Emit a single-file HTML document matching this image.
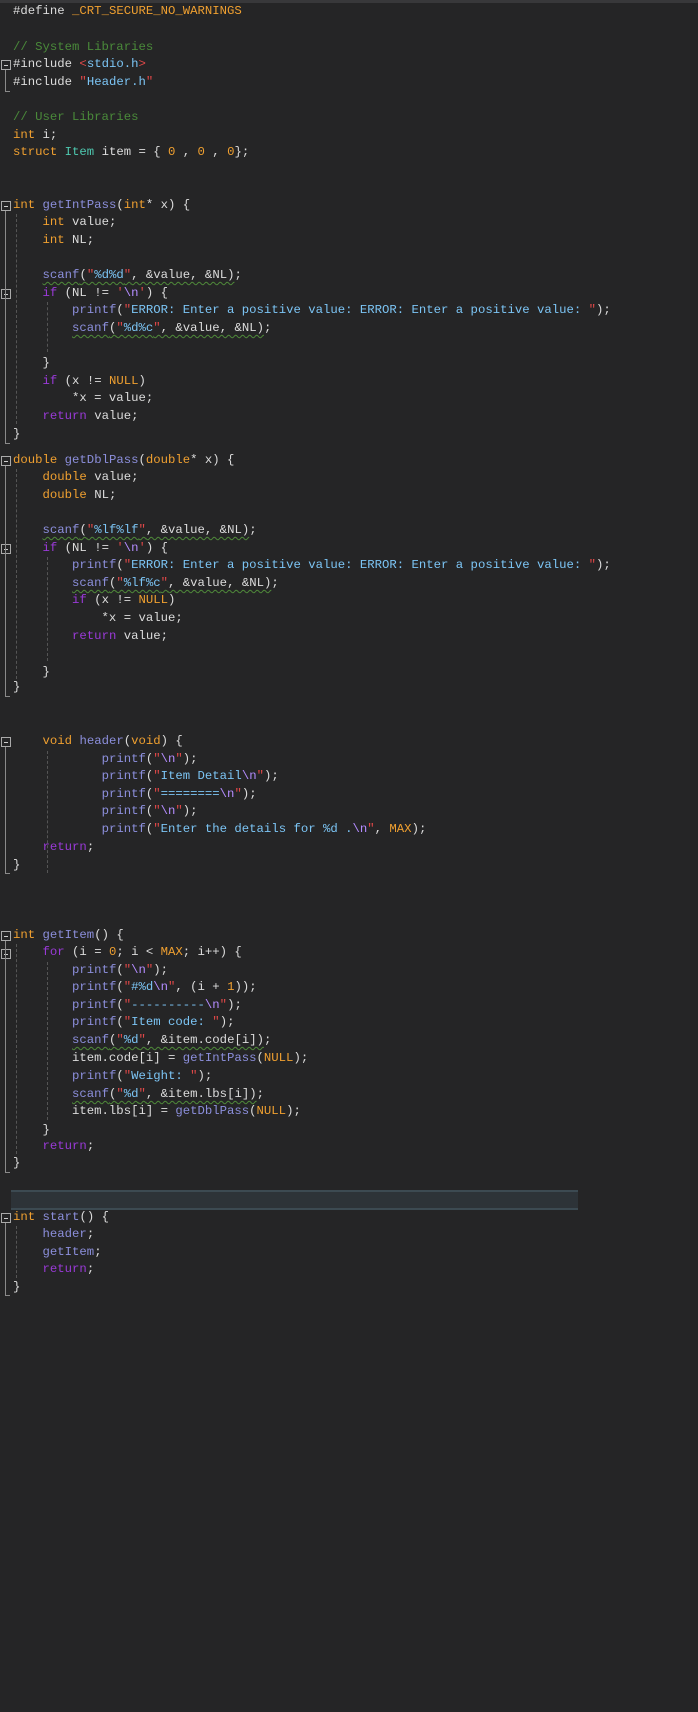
<!DOCTYPE html>
<html><head><meta charset="utf-8"><style>
html,body{margin:0;padding:0;background:#252526;width:698px;height:1712px;overflow:hidden;position:relative}
.top{position:absolute;left:0;top:0;width:698px;height:3px;background:#38383a}
.l{position:absolute;left:13px;height:17px;line-height:17px;font-family:"Liberation Mono",monospace;font-size:12.3px;color:#dcdcdc;white-space:pre}
.k{color:#f0a030}.f{color:#8c8fdc}.s{color:#7cc5f5}.q{color:#e04848}.c{color:#9a3ad8}.m{color:#4a8a3a}.t{color:#4ec9b0}.e{color:#b48cff}.n{color:#f0a030}
.w{text-decoration:underline wavy #4f8a3a;text-decoration-thickness:1px;text-underline-offset:3px}
.box{position:absolute;left:1px;width:8px;height:8px;border:1px solid #aaa;background:#252526}
.box:after{content:"";position:absolute;left:2px;top:3.5px;width:4px;height:1px;background:#ccc}
.v{position:absolute;left:5px;width:1px;background:#8a8a8a}
.h{position:absolute;left:5px;width:5px;height:1px;background:#8a8a8a}
.g{position:absolute;width:0;border-left:1px dashed #555}
.hl{position:absolute;left:11px;top:1190px;width:567px;height:16px;background:#2d3338;border-top:2px solid #3c4a52;border-bottom:2px solid #3c4a52}
</style></head><body>
<div class="top"></div>

<div class="l" style="top:3px">#define <span class="k">_CRT_SECURE_NO_WARNINGS</span></div>
<div class="l m" style="top:39px">// System Libraries</div>
<div class="l" style="top:56px">#include <span class="q">&lt;</span><span class="s">stdio.h</span><span class="q">&gt;</span></div>
<div class="l" style="top:74px">#include <span class="q">"</span><span class="s">Header.h</span><span class="q">"</span></div>
<div class="l m" style="top:109px">// User Libraries</div>
<div class="l" style="top:127px"><span class="k">int</span> i;</div>
<div class="l" style="top:144px"><span class="k">struct</span> <span class="t">Item</span> item = { <span class="n">0</span> , <span class="n">0</span> , <span class="n">0</span>};</div>

<div class="l" style="top:197px"><span class="k">int</span> <span class="f">getIntPass</span>(<span class="k">int</span>* x) {</div>
<div class="l" style="top:214px">    <span class="k">int</span> value;</div>
<div class="l" style="top:232px">    <span class="k">int</span> NL;</div>
<div class="l" style="top:267px">    <span class="w"><span class="f">scanf</span>(<span class="q">"</span><span class="s">%d%d</span><span class="q">"</span>, &amp;value, &amp;NL)</span>;</div>
<div class="l" style="top:285px">    <span class="c">if</span> (NL != <span class="q">'</span><span class="e">\n</span><span class="q">'</span>) {</div>
<div class="l" style="top:302px">        <span class="f">printf</span>(<span class="q">"</span><span class="s">ERROR: Enter a positive value: ERROR: Enter a positive value: </span><span class="q">"</span>);</div>
<div class="l" style="top:320px">        <span class="w"><span class="f">scanf</span>(<span class="q">"</span><span class="s">%d%c</span><span class="q">"</span>, &amp;value, &amp;NL)</span>;</div>
<div class="l" style="top:355px">    }</div>
<div class="l" style="top:373px">    <span class="c">if</span> (x != <span class="n">NULL</span>)</div>
<div class="l" style="top:390px">        *x = value;</div>
<div class="l" style="top:408px">    <span class="c">return</span> value;</div>
<div class="l" style="top:426px">}</div>

<div class="l" style="top:452px"><span class="k">double</span> <span class="f">getDblPass</span>(<span class="k">double</span>* x) {</div>
<div class="l" style="top:469px">    <span class="k">double</span> value;</div>
<div class="l" style="top:487px">    <span class="k">double</span> NL;</div>
<div class="l" style="top:522px">    <span class="w"><span class="f">scanf</span>(<span class="q">"</span><span class="s">%lf%lf</span><span class="q">"</span>, &amp;value, &amp;NL)</span>;</div>
<div class="l" style="top:540px">    <span class="c">if</span> (NL != <span class="q">'</span><span class="e">\n</span><span class="q">'</span>) {</div>
<div class="l" style="top:557px">        <span class="f">printf</span>(<span class="q">"</span><span class="s">ERROR: Enter a positive value: ERROR: Enter a positive value: </span><span class="q">"</span>);</div>
<div class="l" style="top:575px">        <span class="w"><span class="f">scanf</span>(<span class="q">"</span><span class="s">%lf%c</span><span class="q">"</span>, &amp;value, &amp;NL)</span>;</div>
<div class="l" style="top:592px">        <span class="c">if</span> (x != <span class="n">NULL</span>)</div>
<div class="l" style="top:610px">            *x = value;</div>
<div class="l" style="top:628px">        <span class="c">return</span> value;</div>
<div class="l" style="top:664px">    }</div>
<div class="l" style="top:679px">}</div>

<div class="l" style="top:733px">    <span class="k">void</span> <span class="f">header</span>(<span class="k">void</span>) {</div>
<div class="l" style="top:751px">            <span class="f">printf</span>(<span class="q">"</span><span class="e">\n</span><span class="q">"</span>);</div>
<div class="l" style="top:768px">            <span class="f">printf</span>(<span class="q">"</span><span class="s">Item Detail</span><span class="e">\n</span><span class="q">"</span>);</div>
<div class="l" style="top:786px">            <span class="f">printf</span>(<span class="q">"</span><span class="s">========</span><span class="e">\n</span><span class="q">"</span>);</div>
<div class="l" style="top:803px">            <span class="f">printf</span>(<span class="q">"</span><span class="e">\n</span><span class="q">"</span>);</div>
<div class="l" style="top:821px">            <span class="f">printf</span>(<span class="q">"</span><span class="s">Enter the details for %d .</span><span class="e">\n</span><span class="q">"</span>, <span class="n">MAX</span>);</div>
<div class="l" style="top:839px">    <span class="c">return</span>;</div>
<div class="l" style="top:857px">}</div>

<div class="l" style="top:927px"><span class="k">int</span> <span class="f">getItem</span>() {</div>
<div class="l" style="top:944px">    <span class="c">for</span> (i = <span class="n">0</span>; i &lt; <span class="n">MAX</span>; i++) {</div>
<div class="l" style="top:962px">        <span class="f">printf</span>(<span class="q">"</span><span class="e">\n</span><span class="q">"</span>);</div>
<div class="l" style="top:979px">        <span class="f">printf</span>(<span class="q">"</span><span class="s">#%d</span><span class="e">\n</span><span class="q">"</span>, (i + <span class="n">1</span>));</div>
<div class="l" style="top:997px">        <span class="f">printf</span>(<span class="q">"</span><span class="s">----------</span><span class="e">\n</span><span class="q">"</span>);</div>
<div class="l" style="top:1014px">        <span class="f">printf</span>(<span class="q">"</span><span class="s">Item code: </span><span class="q">"</span>);</div>
<div class="l" style="top:1032px">        <span class="w"><span class="f">scanf</span>(<span class="q">"</span><span class="s">%d</span><span class="q">"</span>, &amp;item.code[i])</span>;</div>
<div class="l" style="top:1050px">        item.code[i] = <span class="f">getIntPass</span>(<span class="n">NULL</span>);</div>
<div class="l" style="top:1068px">        <span class="f">printf</span>(<span class="q">"</span><span class="s">Weight: </span><span class="q">"</span>);</div>
<div class="l" style="top:1086px">        <span class="w"><span class="f">scanf</span>(<span class="q">"</span><span class="s">%d</span><span class="q">"</span>, &amp;item.lbs[i])</span>;</div>
<div class="l" style="top:1103px">        item.lbs[i] = <span class="f">getDblPass</span>(<span class="n">NULL</span>);</div>
<div class="l" style="top:1122px">    }</div>
<div class="l" style="top:1138px">    <span class="c">return</span>;</div>
<div class="l" style="top:1155px">}</div>

<div class="hl"></div>
<div class="l" style="top:1209px"><span class="k">int</span> <span class="f">start</span>() {</div>
<div class="l" style="top:1226px">    <span class="f">header</span>;</div>
<div class="l" style="top:1244px">    <span class="f">getItem</span>;</div>
<div class="l" style="top:1261px">    <span class="c">return</span>;</div>
<div class="l" style="top:1279px">}</div>

<!-- fold boxes -->
<div class="box" style="top:60px"></div>
<div class="box" style="top:201px"></div>
<div class="box" style="top:289px"></div>
<div class="box" style="top:456px"></div>
<div class="box" style="top:544px"></div>
<div class="box" style="top:737px"></div>
<div class="box" style="top:931px"></div>
<div class="box" style="top:949px"></div>
<div class="box" style="top:1213px"></div>
<!-- fold lines -->
<div class="v" style="top:70px;height:21px"></div><div class="h" style="top:91px"></div>
<div class="v" style="top:211px;height:232px"></div><div class="h" style="top:443px"></div>
<div class="v" style="top:466px;height:230px"></div><div class="h" style="top:696px"></div>
<div class="v" style="top:747px;height:126px"></div><div class="h" style="top:873px"></div>
<div class="v" style="top:941px;height:231px"></div><div class="h" style="top:1172px"></div>
<div class="v" style="top:1223px;height:72px"></div><div class="h" style="top:1295px"></div>
<!-- indent guides -->
<div class="g" style="left:16px;top:214px;height:210px"></div>
<div class="g" style="left:47px;top:302px;height:50px"></div>
<div class="g" style="left:16px;top:469px;height:210px"></div>
<div class="g" style="left:47px;top:557px;height:104px"></div>
<div class="g" style="left:47px;top:751px;height:122px"></div>
<div class="g" style="left:16px;top:944px;height:210px"></div>
<div class="g" style="left:47px;top:962px;height:158px"></div>
<div class="g" style="left:16px;top:1226px;height:52px"></div>
</body></html>
